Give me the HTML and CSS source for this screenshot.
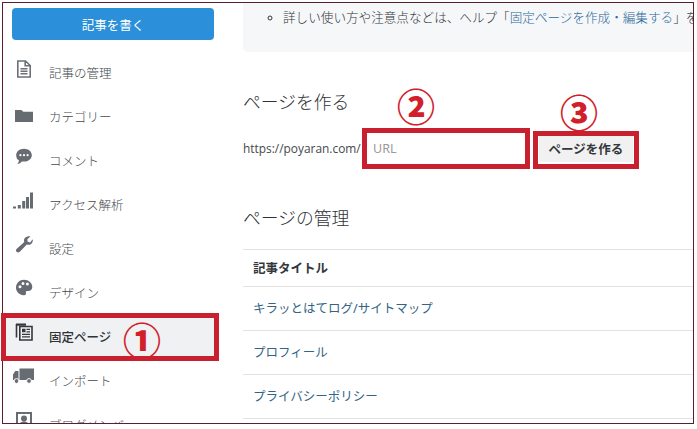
FILE: index.html
```html
<!DOCTYPE html>
<html lang="ja">
<head>
<meta charset="utf-8">
<title>固定ページ</title>
<link rel="stylesheet" href="styles.css">
</head>
<body>
<div class="page">
  <div class="frame">
    <aside class="sidebar">
      <a class="write">記事を書く</a>
      <nav class="nav">
        <a class="item"><svg class="icon" viewBox="0 0 18 18"><path fill="none" stroke="#6b7176" stroke-width="1.6" d="M2.800 1h7.700l4.700 4.500V17H2.800zM10.200 1v4.800h5M5.500 8.800h7M5.500 11.300h7M5.500 13.800h7"/></svg><span>記事の管理</span></a>
        <a class="item"><svg class="icon" viewBox="0 0 18 18"><path fill="#666c72" d="M0 6h6.500l1.700 1.800H18V18H0z"/></svg><span>カテゴリー</span></a>
        <a class="item"><svg class="icon" viewBox="0 0 18 18"><path fill="#666c72" d="M9 .8c4.400 0 7.800 2.800 7.800 6.400S13.400 13.600 9 13.600c-.8 0-1.500-.1-2.200-.2-1 1.200-2.500 2.400-4.600 2.700 1-1 1.600-2.200 1.700-3.800C2 11.200 1.200 9.300 1.200 7.200 1.200 3.600 4.600.8 9 .8z"/><circle cx="5.400" cy="7.200" r="1.100" fill="#fff"/><circle cx="9" cy="7.200" r="1.100" fill="#fff"/><circle cx="12.600" cy="7.200" r="1.100" fill="#fff"/></svg><span>コメント</span></a>
        <a class="item"><svg class="icon wide" viewBox="0 0 20 18"><path fill="#666c72" d="M0 14.500h3v2H0zM4.800 13h3v3.500h-3zM9.200 9h3v7.500h-3zM13 5h3v11.500h-3zM17 .5h3v16h-3z"/></svg><span>アクセス解析</span></a>
        <a class="item"><svg class="icon" viewBox="0 0 18 18"><path fill="#666c72" d="M17.600 3.200c.6 2-.1 4-1.800 5-1.300.8-2.800.8-4 .2l-7 7.300c-1 1-2.300 1-3.200.1-.9-.9-.8-2.200.2-3.100l7.500-6.700c-.6-1.300-.4-2.900.5-4.100C11.700.5 13.600 0 15.400.5l-3.100 2.800.4 2.500 2.400.6z"/></svg><span>設定</span></a>
        <a class="item"><svg class="icon" viewBox="0 0 18 18"><path fill="#666c72" fill-rule="evenodd" d="M9 .8c4.800 0 8.300 3.300 8.300 7.200 0 3-2.300 4.300-4.500 4.100-1.500-.1-2.300.6-1.900 1.700.5 1.400-.4 2.700-2.200 2.500C4.400 16 1 12.900 1 8.800 1 4.300 4.500.8 9 .8zM5 6.200a1.500 1.500 0 1 0 0 3 1.500 1.500 0 0 0 0-3zM8 3a1.500 1.500 0 1 0 0 3 1.500 1.500 0 0 0 0-3zM12.400 3.600a1.500 1.500 0 1 0 0 3 1.500 1.500 0 0 0 0-3z"/></svg><span>デザイン</span></a>
        <a class="item active"><svg class="icon" viewBox="0 0 18 18"><path fill="none" stroke="#33383c" stroke-width="1.600" d="M4.800 3.500h12.200v13.500H4.800zM1.500 1v13.500"/><path fill="#33383c" d="M1 .5h10v2.300H1zM7 5.800h3.500v3.500H7zM11.500 5.800h3.500V7h-3.500zM11.500 8.200h3.500v1.200h-3.500zM7 10.800h8V12H7zM7 13.300h8v1.200H7z"/></svg><span>固定ページ</span></a>
        <a class="item"><svg class="icon truck" viewBox="0 0 21 18"><path fill="#666c72" d="M6.500 1.500H21V13H6.500zM0 7.500L2.300 4h3.200v9H0z"/><circle cx="3.500" cy="14" r="2.400" fill="#666c72" stroke="#fff"/><circle cx="16" cy="14" r="2.400" fill="#666c72" stroke="#fff"/></svg><span>インポート</span></a>
        <a class="item"><svg class="icon" viewBox="0 0 18 18"><path fill="none" stroke="#666c72" stroke-width="2" d="M2 2h14v14H2z"/><circle cx="9" cy="7.500" r="3" fill="#666c72"/><path fill="#666c72" d="M4 15c.3-3 2-4.500 5-4.500s4.700 1.500 5 4.500z"/></svg><span>ブログメンバー</span></a>
      </nav>
    </aside>
    <main class="main">
      <div class="note">
        <ul class="note-list">
          <li>詳しい使い方や注意点などは、ヘルプ「<a class="link">固定ページを作成・編集する</a>」を</li>
        </ul>
      </div>
      <section class="create">
        <h2 class="heading">ページを作る</h2>
        <div class="form-row">
          <span class="domain">https://poyaran.com/</span>
          <input class="url" type="text" placeholder="URL">
          <button class="submit" type="button">ページを作る</button>
        </div>
      </section>
      <section class="manage">
        <h2 class="heading">ページの管理</h2>
        <div class="table">
          <div class="row head">記事タイトル</div>
          <div class="row"><a class="title">キラッとはてログ/サイトマップ</a></div>
          <div class="row"><a class="title">プロフィール</a></div>
          <div class="row"><a class="title">プライバシーポリシー</a></div>
        </div>
      </section>
    </main>
  </div>
  <div class="box box-1"></div>
  <div class="box box-2"></div>
  <div class="box box-3"></div>
  <span class="num num-1">①</span>
  <span class="num num-2">②</span>
  <span class="num num-3">③</span>
</div>
</body>
</html>
```
FILE: styles.css
```css
* { box-sizing: border-box; }
html, body { margin: 0; padding: 0; background: #fff; }
body {
  font-family: "Noto Sans", "Noto Sans CJK JP", sans-serif;
  font-size: 12.500px;
  font-weight: 300;
  color: #33383b;
}
.page { position: relative; width: 697px; height: 429px; overflow: hidden; padding: 2px 0 0 2px; }
.frame {
  width: 692px;
  height: 422px;
  border: 1px solid #5a1f2e;
  display: flex;
  overflow: hidden;
  background: #fff;
}
.sidebar { width: 240px; flex: none; padding: 5px 25px 0 0; }
.write {
  display: flex;
  align-items: center;
  justify-content: center;
  margin-left: 9px;
  height: 32px;
  width: 202px;
  background: #2b90d9;
  border-radius: 4px;
  color: #fff;
  font-weight: 400;
}
.nav { margin-top: 11px; }
.item {
  height: 43.900px;
  display: flex;
  align-items: center;
  gap: 16px;
  padding-left: 12px;
  color: #44494d;
}
.icon { width: 18px; height: 18px; flex: none; margin-top: -8px; }
.wide { width: 20px; margin-left: -2px; }
.truck { width: 21px; margin-left: -2px; margin-right: -1px; }
.active { background: #f0f1f3; color: #2f3437; font-weight: 500; }
.main { flex: 1; min-width: 0; }
.note {
  height: 49px;
  background: #f6f7f9;
  border-radius: 0 0 0 5px;
  padding-top: 6px;
}
.note-list { margin: 0; padding: 0 0 0 40px; white-space: nowrap; list-style: circle; line-height: 18px; font-size: 12.600px; }
.link { color: #2a6a99; }
.create { padding-top: 37px; }
.heading { margin: 0; font-size: 17.800px; font-weight: 300; line-height: 26px; color: #2f3336; }
.form-row { display: flex; align-items: center; height: 34px; margin-top: 16px; }
.domain { font-family: "Open Sans", sans-serif; font-size: 11.900px; font-weight: 400; width: 124px; flex: none; color: #45494c; }
.url {
  width: 158px;
  height: 31px;
  border: 0;
  padding: 0 6px;
  background: #fff;
  font: 400 12.500px "Noto Sans", sans-serif;
  outline: none;
}
.url::placeholder { color: #9a9a9a; opacity: 1; }
.submit {
  width: 94px;
  height: 28px;
  margin-left: 14px;
  border: 0;
  background: #f1f1f1;
  color: #33383c;
  font: 700 12.500px "Noto Sans CJK JP", sans-serif;
}
.manage { padding-top: 40px; }
.table { margin-top: 18px; border-top: 1px solid #e2e2e2; }
.row {
  height: 44px;
  display: flex;
  align-items: center;
  padding-left: 10px;
  padding-bottom: 2px;
  border-bottom: 1px solid #e2e2e2;
}
.head { height: 37px; font-weight: 700; color: #33383c; }
.title { color: #336485; font-weight: 400; }
.box { position: absolute; border: 5px solid #c8202e; }
.box-1 { left: 1px; top: 313px; width: 218px; height: 48px; }
.box-2 { left: 362px; top: 128px; width: 168px; height: 41px; }
.box-3 { left: 533px; top: 131px; width: 106px; height: 38px; }
.num {
  position: absolute;
  font-family: "Noto Sans CJK JP", sans-serif;
  font-size: 38px;
  font-weight: 900;
  line-height: 40px;
  width: 40px;
  text-align: center;
  color: #d1202a;
}
.num-1 { left: 122px; top: 319px; }
.num-2 { left: 396px; top: 85px; }
.num-3 { left: 559px; top: 91px; }
```
